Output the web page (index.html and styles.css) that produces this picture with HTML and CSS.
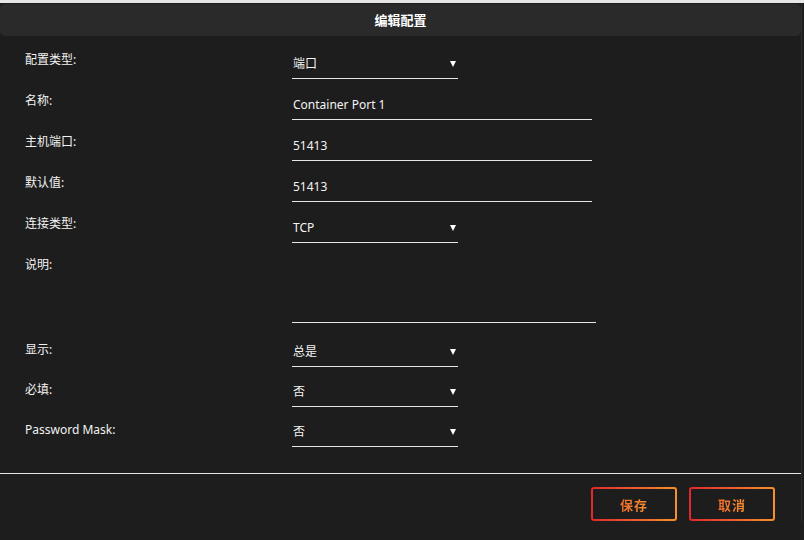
FILE: index.html
```html
<!DOCTYPE html>
<html lang="zh-CN">
<head>
  <meta charset="UTF-8">
  <title>编辑配置</title>
  <link rel="stylesheet" href="styles.css">
</head>
<body>
<div class="topline"></div>
<div class="dialog">
  <div class="dialog-header">编辑配置</div>

  <form class="config-form">
    <div class="row">
      <label>配置类型:</label>
      <div class="field select short">端口<span class="arrow"></span></div>
    </div>
    <div class="row">
      <label>名称:</label>
      <div class="field long">Container Port 1</div>
    </div>
    <div class="row">
      <label>主机端口:</label>
      <div class="field long">51413</div>
    </div>
    <div class="row">
      <label>默认值:</label>
      <div class="field long">51413</div>
    </div>
    <div class="row">
      <label>连接类型:</label>
      <div class="field select short">TCP<span class="arrow"></span></div>
    </div>
    <div class="row row-text">
      <label>说明:</label>
      <div class="field textarea"></div>
    </div>
    <div class="row row-b">
      <label>显示:</label>
      <div class="field select short">总是<span class="arrow"></span></div>
    </div>
    <div class="row row-b">
      <label>必填:</label>
      <div class="field select short">否<span class="arrow"></span></div>
    </div>
    <div class="row row-b">
      <label class="latin">Password Mask:</label>
      <div class="field select short">否<span class="arrow"></span></div>
    </div>
  </form>

  <div class="dialog-footer">
    <button class="btn"><span>保存</span></button>
    <button class="btn"><span>取消</span></button>
  </div>
</div>
</body>
</html>
```

FILE: styles.css
```css
body {
  margin: 0;
  background: #1d1d1d;
  font-family: "Noto Sans", "Noto Sans CJK SC", sans-serif;
  color: #f0f0f0;
  width: 804px;
  height: 540px;
  overflow: hidden;
}
.topline {
  height: 3px;
  background: #e4e6e8;
}
.dialog {
  width: 801px;
  border-right: 1px solid #2e2e2e;
}
.dialog-header {
  margin-top: 1px;
  height: 32px;
  line-height: 32px;
  background: #2a2a2a;
  border-radius: 5px;
  text-align: center;
  font-size: 13px;
  font-weight: bold;
  color: #ffffff;
}
.config-form {
  padding: 14px 0 0 25px;
  height: 423px;
}
.row {
  display: grid;
  grid-template-columns: 267px auto;
  height: 41px;
}
.row-b {
  height: 40px;
}
.row-b .field {
  margin-top: -2px;
}
.row-text {
  height: 85px;
}
.row label {
  font-size: 12px;
  line-height: 20px;
  color: #f2f2f2;
}
.field {
  box-sizing: border-box;
  position: relative;
  padding: 4px 0 4px 1px;
  font-size: 12px;
  line-height: 20px;
  height: 29px;
  border-bottom: 1px solid #e6e6e6;
  color: #f4f4f4;
}
.short {
  width: 166px;
}
.long {
  width: 300px;
}
.textarea {
  width: 304px;
  height: 68px;
}
.arrow {
  position: absolute;
  right: 2px;
  top: 11px;
  width: 0;
  height: 0;
  border-left: 3px solid transparent;
  border-right: 3px solid transparent;
  border-top: 6px solid #ffffff;
}
.dialog-footer {
  border-top: 1px solid #e6e6e6;
  display: flex;
  justify-content: flex-end;
  gap: 12px;
  padding: 13px 26px 0 0;
}
.btn {
  width: 86px;
  height: 34px;
  border: 2px solid transparent;
  border-radius: 3px;
  background: linear-gradient(#1d1d1d, #1d1d1d) padding-box,
              linear-gradient(90deg, #e2272b, #f7912c) border-box;
  font-family: "Noto Sans CJK SC", sans-serif;
  font-size: 13px;
  font-weight: bold;
  letter-spacing: 1px;
  cursor: pointer;
}
.btn span {
  background: linear-gradient(90deg, #ee6a2c, #f68f2c);
  -webkit-background-clip: text;
  background-clip: text;
  color: transparent;
}
```
